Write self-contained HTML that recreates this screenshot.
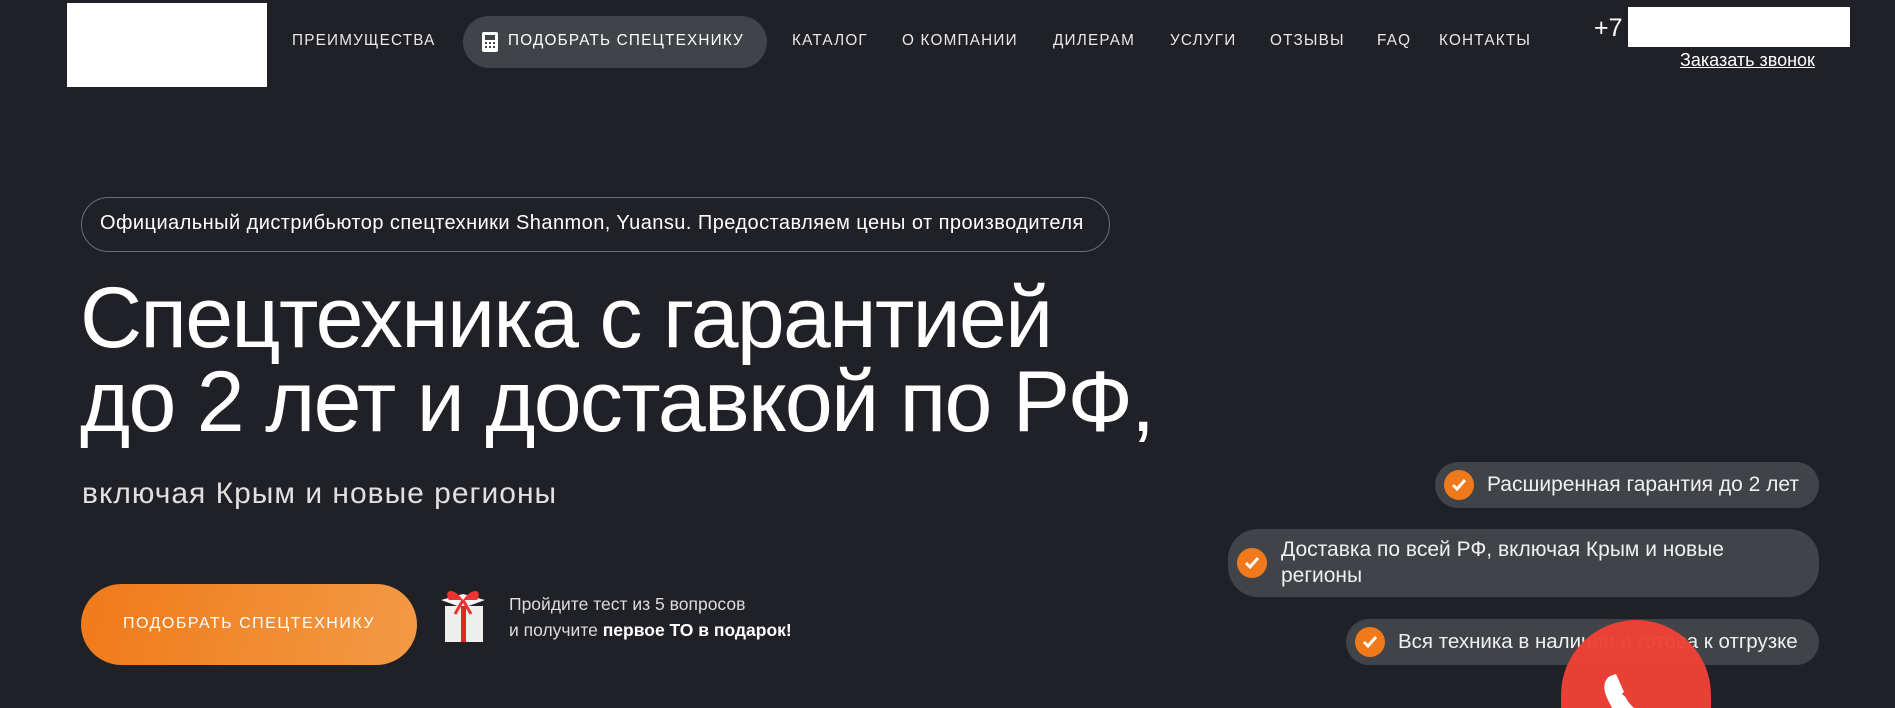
<!DOCTYPE html>
<html><head><meta charset="utf-8"><style>
*{margin:0;padding:0;box-sizing:border-box}
html,body{width:1895px;height:708px;overflow:hidden}
body{background:#1f2126;font-family:"Liberation Sans",sans-serif;color:#fff}
#w{position:relative;width:1895px;height:708px;overflow:hidden}
.a{position:absolute;white-space:nowrap}
.nav{font-size:15.3px;letter-spacing:1.2px;top:32px;color:#e8e8e8}
.pill{position:absolute;background:#404347;border-radius:30px}
.chk{position:absolute;width:30px;height:30px;border-radius:50%;background:#f07a1b}
.chk svg{position:absolute;left:7px;top:8px}
.pt{position:absolute;font-size:21px;color:#f0f0f0;line-height:26px}
</style></head><body><div id="w">
<div class="a" style="left:67px;top:3px;width:200px;height:84px;background:#fff"></div>
<div class="a nav" style="left:292px">ПРЕИМУЩЕСТВА</div>
<div class="pill" style="left:463px;top:16px;width:304px;height:52px"></div>
<svg class="a" style="left:482px;top:32px" width="16" height="20" viewBox="0 0 16 20"><rect x="0" y="0" width="16" height="20" rx="2" fill="#fff"/><rect x="3" y="3" width="10" height="5" fill="#404347"/><g fill="#404347"><rect x="3" y="10" width="2" height="2"/><rect x="7" y="10" width="2" height="2"/><rect x="11" y="10" width="2" height="2"/><rect x="3" y="14" width="2" height="2"/><rect x="7" y="14" width="2" height="2"/><rect x="11" y="14" width="2" height="2"/></g></svg>
<div class="a nav" style="left:508px;color:#fff">ПОДОБРАТЬ СПЕЦТЕХНИКУ</div>
<div class="a nav" style="left:792px">КАТАЛОГ</div>
<div class="a nav" style="left:902px">О КОМПАНИИ</div>
<div class="a nav" style="left:1053px">ДИЛЕРАМ</div>
<div class="a nav" style="left:1170px">УСЛУГИ</div>
<div class="a nav" style="left:1270px">ОТЗЫВЫ</div>
<div class="a nav" style="left:1377px">FAQ</div>
<div class="a nav" style="left:1439px">КОНТАКТЫ</div>
<div class="a" style="left:1594px;top:14px;font-size:25px">+7</div>
<div class="a" style="left:1628px;top:7px;width:222px;height:40px;background:#fff"></div>
<div class="a" style="left:1680px;top:50px;font-size:18px;text-decoration:underline">Заказать звонок</div>

<div class="a" style="left:81px;top:197px;width:1029px;height:55px;border:1px solid #6b6e73;border-radius:28px"></div>
<div class="a" style="left:100px;top:212px;font-size:20px;letter-spacing:0.45px">Официальный дистрибьютор спецтехники Shanmon, Yuansu. Предоставляем цены от производителя</div>
<div class="a" style="left:80px;top:276px;font-size:86px;line-height:84px;letter-spacing:-1.7px">Спецтехника с гарантией<br>до 2 лет и доставкой по РФ,</div>
<div class="a" style="left:82px;top:477px;font-size:30px;letter-spacing:1px;color:#e0e0e0">включая Крым и новые регионы</div>

<div class="a" style="left:81px;top:584px;width:336px;height:81px;border-radius:41px;background:linear-gradient(100deg,#ef7a1a,#f39a45)"></div>
<div class="a" style="left:81px;top:615px;width:336px;text-align:center;font-size:16px;letter-spacing:1.5px">ПОДОБРАТЬ СПЕЦТЕХНИКУ</div>
<svg class="a" style="left:435px;top:584px" width="56" height="60" viewBox="0 0 56 60"><rect x="10" y="22" width="38" height="36" fill="#eee"/><path d="M6 16 L28 10 L50 16 L28 24 Z" fill="#f5f5f5"/><rect x="26" y="22" width="5" height="36" fill="#e22"/><path d="M28 16 C18 2 8 6 14 16 Z M28 16 C38 2 48 6 42 16 Z" fill="#e33"/><path d="M28 16 L20 30 M28 16 L36 30" stroke="#e33" stroke-width="3"/></svg>
<div class="a" style="left:509px;top:591px;font-size:17.5px;line-height:26px;color:#ddd">Пройдите тест из 5 вопросов<br>и получите <b style="color:#fff">первое ТО в подарок!</b></div>

<div class="pill" style="left:1435px;top:462px;width:384px;height:46px"></div>
<div class="chk" style="left:1444px;top:470px"><svg width="16" height="14" viewBox="0 0 16 14"><path d="M2 7 L6 11 L14 2" stroke="#fff" stroke-width="3" fill="none"/></svg></div>
<div class="pt" style="left:1487px;top:472px">Расширенная гарантия до 2 лет</div>
<div class="pill" style="left:1228px;top:529px;width:591px;height:68px"></div>
<div class="chk" style="left:1237px;top:548px"><svg width="16" height="14" viewBox="0 0 16 14"><path d="M2 7 L6 11 L14 2" stroke="#fff" stroke-width="3" fill="none"/></svg></div>
<div class="pt" style="left:1281px;top:537px">Доставка по всей РФ, включая Крым и новые<br>регионы</div>
<div class="pill" style="left:1346px;top:619px;width:473px;height:46px"></div>
<div class="chk" style="left:1355px;top:627px"><svg width="16" height="14" viewBox="0 0 16 14"><path d="M2 7 L6 11 L14 2" stroke="#fff" stroke-width="3" fill="none"/></svg></div>
<div class="pt" style="left:1398px;top:629px;font-size:20.5px">Вся техника в наличии и готова к отгрузке</div>
<div class="a" style="left:1561px;top:620px;width:150px;height:88px;border-radius:75px 75px 0 0;background:rgba(238,65,54,0.97)"></div>
<svg class="a" style="left:1598px;top:668px" width="70" height="40" viewBox="0 0 70 40"><path d="M12 8 C6 12 4 20 10 32 L14 40 L36 40 C32 36 30 34 28 30 C24 24 22 28 26 24 L18 6 Z" fill="#fff"/></svg>
</div></body></html>
